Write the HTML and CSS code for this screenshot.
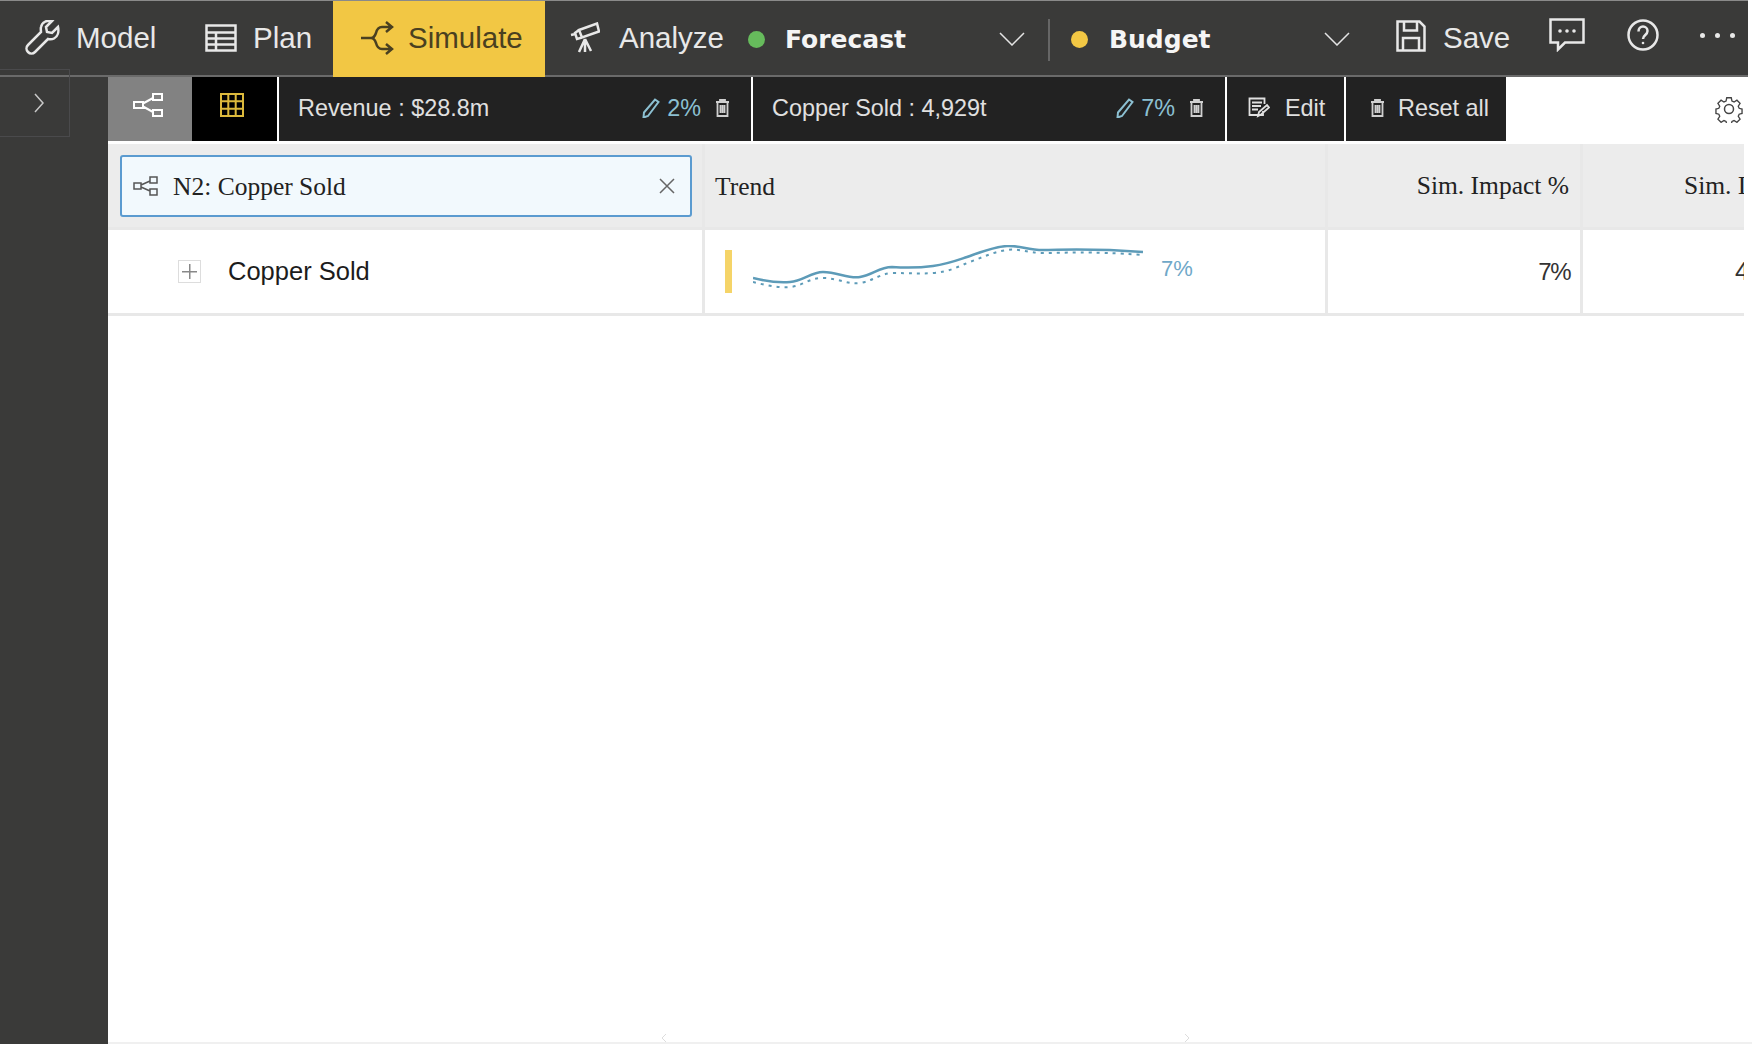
FILE: index.html
```html
<!DOCTYPE html>
<html lang="en">
<head>
    <meta charset="UTF-8">
    <meta name="viewport" content="width=device-width, initial-scale=1.0">
    <title>Simulate</title>
    <link rel="stylesheet" href="styles.css">
</head>
<body>

<header class="topbar">
    <div class="nav-item nav-model">
        <svg class="nav-icon" width="36" height="36" viewBox="0 0 36 36"><path d="M33 7l-6 6-5-1-1-5 6-6c-5-1-10 1-11 6-.5 2 0 4 0 5L3 25c-2 2-2 5 0 7s5 2 7 0l13-13c2 .5 4 .5 6-.5 4-2 5-7 4-11.500z"/></svg>
        <span>Model</span>
    </div>
    <div class="nav-item nav-plan">
        <svg class="nav-icon" width="32" height="28" viewBox="0 0 32 28"><path d="M1.500 1.500h29v25h-29zM1.500 8.500h29M1.500 14.500h29M1.500 20.500h29M11 8.500v18"/></svg>
        <span>Plan</span>
    </div>
    <div class="nav-item nav-simulate">
        <svg class="nav-icon" width="34" height="34" viewBox="0 0 34 34"><path d="M0 17h10c3 0 4-2 5-5 1-4 3-6 6-6h10M25 1l6 5-6 5M10 17c3 0 4 2 5 5 1 4 3 6 6 6h10M25 23l6 5-6 5"/></svg>
        <span>Simulate</span>
    </div>
    <div class="nav-item nav-analyze">
        <svg class="nav-icon" width="30" height="32" viewBox="0 0 30 32"><path d="M9 8L27 1.500l2 8-17 6zM9 8l-4 3 2 6 5-1.500M1 13l4-1M15 17l-6 13M15 17l0 13M15 17l6 12"/></svg>
        <span>Analyze</span>
    </div>
    <div class="scenario scenario-forecast">
        <span class="dot dot-green"></span>
        <span class="scenario-name">Forecast</span>
        <svg class="chevron" width="26" height="14" viewBox="0 0 26 14"><path d="M1 1l12 12L25 1"/></svg>
    </div>
    <div class="scenario scenario-budget">
        <span class="dot dot-yellow"></span>
        <span class="scenario-name">Budget</span>
        <svg class="chevron" width="26" height="14" viewBox="0 0 26 14"><path d="M1 1l12 12L25 1"/></svg>
    </div>
    <div class="nav-item nav-save">
        <svg class="nav-icon" width="30" height="32" viewBox="0 0 30 32"><path d="M1.500 1.500h22l5 5v24h-27zM8 1.500v9h13v-9M7 30.500V18h16v12.500"/></svg>
        <span>Save</span>
    </div>
    <svg class="nav-icon icon-comment" width="36" height="34" viewBox="0 0 36 34"><path d="M1.500 1.500h33v23H16l-7 7v-7H1.500z"/><circle class="fill-white" cx="11" cy="13" r="1.800"/><circle class="fill-white" cx="18" cy="13" r="1.800"/><circle class="fill-white" cx="25" cy="13" r="1.800"/></svg>
    <svg class="nav-icon icon-help" width="32" height="32" viewBox="0 0 32 32"><circle cx="16" cy="16" r="14.500"/><path d="M11.500 12.500c0-3 2-5 4.500-5s4.500 2 4.500 4.500c0 4-4.500 4-4.500 8"/><circle class="fill-white" cx="16" cy="24" r="1.300"/></svg>
    <div class="more-dots"><i></i><i></i><i></i></div>
</header>

<div class="content">
    <aside class="sidebar">
        <div class="side-toggle">
            <svg class="side-chevron" width="10" height="20" viewBox="0 0 10 20"><path d="M1 1l8 9-8 9"/></svg>
        </div>
    </aside>

    <main class="main">
        <div class="toolbar">
            <div class="tab tab-tree">
                <svg class="tree-icon" width="30" height="24" viewBox="0 0 30 24"><path d="M1 9h9v6H1zM20 1h9v6h-9zM20 17h9v6h-9zM10 10.500L20 5M10 13.500L20 19"/></svg>
            </div>
            <div class="tab tab-grid">
                <svg class="grid-icon" width="24" height="24" viewBox="0 0 24 24"><path d="M1 1h22v22H1zM8.300 1v22M15.700 1v22M1 8.300h22M1 15.700h22"/></svg>
            </div>
            <div class="chip">
                <span class="chip-label">Revenue : $28.8m</span>
                <svg class="pencil" width="18" height="20" viewBox="0 0 18 20"><path d="M13 1.500l3.500 2.500L6 18l-4.500 1.500L2 14.500z"/></svg>
                <span class="chip-value">2%</span>
                <svg class="trash" width="15" height="18" viewBox="0 0 15 18"><path d="M5 2.500V1h5v1.500M1 3h13M2.500 3h10v14h-10zM5.500 6v8M7.500 6v8M9.500 6v8"/></svg>
            </div>
            <div class="chip">
                <span class="chip-label">Copper Sold : 4,929t</span>
                <svg class="pencil" width="18" height="20" viewBox="0 0 18 20"><path d="M13 1.500l3.500 2.500L6 18l-4.500 1.500L2 14.500z"/></svg>
                <span class="chip-value">7%</span>
                <svg class="trash" width="15" height="18" viewBox="0 0 15 18"><path d="M5 2.500V1h5v1.500M1 3h13M2.500 3h10v14h-10zM5.500 6v8M7.500 6v8M9.500 6v8"/></svg>
            </div>
            <div class="action action-edit">
                <svg class="edit-icon" width="22" height="22" viewBox="0 0 22 22"><path d="M15 14v4H1.500V1.500h15V7M4 5.500h10M4 9h9M4 12.500h6M10 19l1-4 8-7 2 2.500-8 7z"/></svg>
                <span>Edit</span>
            </div>
            <div class="action action-reset">
                <svg class="trash trash-reset" width="15" height="18" viewBox="0 0 15 18"><path d="M5 2.500V1h5v1.500M1 3h13M2.500 3h10v14h-10zM5.500 6v8M7.500 6v8M9.500 6v8"/></svg>
                <span>Reset all</span>
            </div>
            <svg class="gear" width="28" height="28" viewBox="0 0 28 28"><circle cx="14" cy="14" r="4.500"/><path d="M11.500 1.500h5l.8 3.700 2.300 1 3.200-2 3.500 3.500-2 3.200 1 2.300 3.200.8v5l-3.200.8-1 2.300 2 3.200-3.500 3.500-3.200-2-2.300 1-.8 3.200h-5l-.8-3.200-2.300-1-3.200 2-3.500-3.500 2-3.200-1-2.300-3.200-.8v-5l3.200-.8 1-2.300-2-3.200 3.500-3.500 3.200 2 2.300-1z" transform="translate(1.400 1.400) scale(.9)"/></svg>
        </div>

        <div class="grid-table">
            <div class="cell head head-name">
                <div class="search-box">
                    <svg class="tree-small" width="26" height="20" viewBox="0 0 26 20"><path d="M1 7h7v6H1zM17 1h7v6h-7zM17 13h7v6h-7zM8 9l9-4M8 11l9 4"/></svg>
                    <span class="search-text">N2: Copper Sold</span>
                    <svg class="search-close" width="16" height="16" viewBox="0 0 16 16"><path d="M1 1l14 14M15 1L1 15"/></svg>
                </div>
            </div>
            <div class="cell head head-trend">Trend</div>
            <div class="cell head head-right">Sim. Impact %</div>
            <div class="cell head head-clip">Sim. Impact</div>

            <div class="cell row-name">
                <span class="expand"></span>
                <span>Copper Sold</span>
            </div>
            <div class="cell row-trend">
                <span class="trend-bar"></span>
                <svg class="spark" width="396" height="50" viewBox="0 0 396 50">
                    <path class="spark-dash" d="M0 37C12 40 25 43 37 42C50 41 58 32 70 33C85 33 95 40 107 38C120 36 126 29 139 28C155 28 165 29 180 28C195 27 205 22 214 18C228 13 240 7 254 5C265 3 275 8 290 8C310 8 335 6 390 10"/>
                    <path class="spark-line" d="M0 33C12 36 25 38 37 37C50 36 58 27 70 27C85 27 95 34 107 32C120 30 126 22 139 22C155 23 165 23 180 21C195 19 205 15 214 12C228 7 240 2 254 1C265 0 275 5 290 5C310 5 335 3 390 7"/>
                </svg>
                <span class="trend-value">7%</span>
            </div>
            <div class="cell row-right">7%</div>
            <div class="cell row-clip">4,929t</div>
        </div>

        <div class="scroll-hint">
            <svg width="6" height="8" viewBox="0 0 6 8"><path d="M5 0L1 4l4 4"/></svg>
            <svg width="6" height="8" viewBox="0 0 6 8"><path d="M1 0l4 4-4 4"/></svg>
        </div>
    </main>
</div>

</body>
</html>
```

FILE: styles.css
```css
body {
    margin: 0;
    width: 1752px;
    height: 1044px;
    overflow: hidden;
    background-color: #fff;
    font-family: "Liberation Sans", Arial, sans-serif;
    display: flex;
    flex-direction: column;
}
svg {
    display: block;
    flex: none;
    fill: none;
}

/* top bar */
.topbar {
    height: 74px;
    margin-right: 4px;
    flex: none;
    display: flex;
    align-items: center;
    background-color: #3a3a39;
    border-top: 1px solid #8a8a8a;
    border-bottom: 2px solid #6a6a6a;
    color: #e8e8e8;
    font-size: 29.5px;
}
.nav-item {
    display: flex;
    align-items: center;
    height: 100%;
}
.nav-icon {
    stroke: #e8e8e8;
    stroke-width: 2.500;
}
.fill-white {
    fill: #e8e8e8;
    stroke: none;
}
.nav-model {
    padding-left: 25px;
    gap: 15px;
    width: 205px;
    box-sizing: border-box;
}
.nav-plan {
    gap: 16px;
    width: 128px;
}
.nav-simulate {
    width: 212px;
    box-sizing: border-box;
    padding-left: 28px;
    gap: 13px;
    background-color: #f2c744;
    color: #4a4020;
    box-shadow: 0 2px 0 #f2c744;
}
.nav-simulate .nav-icon {
    stroke: #4a4020;
}
.nav-analyze {
    margin-left: 25px;
    gap: 19px;
    width: 178px;
}
.scenario {
    display: flex;
    align-items: center;
    height: 100%;
    font-family: "DejaVu Sans", sans-serif;
    font-weight: bold;
    font-size: 25px;
    color: #f5f5f5;
}
.scenario-forecast {
    width: 302px;
    box-sizing: border-box;
    position: relative;
}
.scenario-forecast::after {
    content: "";
    position: absolute;
    left: 300px;
    top: 18px;
    width: 2px;
    height: 42px;
    background-color: #666;
}
.scenario-budget {
    margin-left: 21px;
    width: 325px;
}
.dot {
    width: 17px;
    height: 17px;
    border-radius: 50%;
    flex: none;
    margin-top: 3px;
}
.dot-green {
    background-color: #66bb5c;
}
.dot-yellow {
    background-color: #f2c744;
}
.scenario-name {
    margin-left: 20px;
    flex: 1;
    padding-top: 3px;
}
.chevron {
    stroke: #e4e4e4;
    stroke-width: 1.500;
    margin-top: 1px;
}
.scenario-forecast .chevron {
    margin-right: 25px;
}
.scenario-budget .chevron {
    margin-left: 4px;
}
.scenario-budget .scenario-name {
    margin-left: 21px;
    flex: 0 0 211px;
}
.nav-save {
    gap: 17px;
}
.nav-save .nav-icon {
    margin-top: -4px;
}
.icon-comment {
    margin-left: 39px;
    margin-top: -7px;
}
.icon-help {
    margin-left: 42px;
    margin-top: -7px;
}
.more-dots {
    margin-left: 41px;
    margin-top: -5px;
    display: flex;
    gap: 10px;
}
.more-dots i {
    width: 5px;
    height: 5px;
    border-radius: 50%;
    background-color: #e8e8e8;
}

/* page below the bar */
.content {
    flex: 1;
    display: flex;
    min-height: 0;
}
.sidebar {
    width: 108px;
    flex: none;
    background-color: #3a3a39;
}
.side-toggle {
    width: 69px;
    height: 66px;
    margin-top: -8px;
    display: flex;
    align-items: center;
    justify-content: center;
    border: 1px solid #4a4a4c;
    border-left: none;
    position: relative;
}
.side-chevron {
    stroke: #c8c8c8;
    stroke-width: 1.500;
    margin-left: 9px;
}
.main {
    flex: 1;
    min-width: 0;
    display: flex;
    flex-direction: column;
    padding-right: 8px;
}

/* toolbar with chips */
.toolbar {
    height: 64px;
    flex: none;
    display: flex;
    color: #e0e0e0;
    font-size: 23.4px;
}
.tab {
    display: flex;
    align-items: center;
    justify-content: center;
    padding-bottom: 9px;
    box-sizing: border-box;
}
.tab-tree {
    width: 84px;
    padding-right: 4px;
    background-color: #828282;
}
.tab-grid {
    width: 85px;
    padding-right: 5px;
    background-color: #000;
}
.tree-icon {
    stroke: #fff;
    stroke-width: 2;
}
.grid-icon {
    stroke: #dcb93c;
    stroke-width: 2;
}
.chip {
    width: 472px;
    box-sizing: border-box;
    display: flex;
    align-items: center;
    margin-left: 2px;
    padding: 0 21px 2px 19px;
    background-color: #222;
}
.chip-label {
    flex: 1;
}
.pencil {
    stroke: #8cc0d2;
    stroke-width: 2;
    margin-right: 7px;
}
.chip-value {
    color: #8cc0d2;
    margin-right: 14px;
}
.trash {
    stroke: #d0d0d0;
    stroke-width: 1.800;
}
.action {
    display: flex;
    align-items: center;
    margin-left: 2px;
    padding-bottom: 2px;
    background-color: #222;
    box-sizing: border-box;
}
.action-edit {
    width: 117px;
    padding-left: 21px;
    gap: 15px;
}
.edit-icon {
    stroke: #e0e0e0;
    stroke-width: 1.800;
}
.action-reset {
    width: 160px;
    padding-left: 24px;
    gap: 13px;
}
.gear {
    margin-left: auto;
    margin-right: 1px;
    align-self: center;
    stroke: #444;
    stroke-width: 1.500;
}

/* table */
.grid-table {
    margin-top: 3px;
    display: grid;
    grid-template-columns: 597px 623px 255px 161px;
    grid-template-rows: 86px 86px;
    color: #222;
}
.cell {
    box-sizing: border-box;
    display: flex;
    align-items: center;
    white-space: nowrap;
    overflow: hidden;
    border-right: 3px solid #e8e8e8;
    border-bottom: 3px solid #e8e8e8;
}
.cell:nth-child(4n) {
    border-right: none;
}
.head {
    background-color: #ececec;
    font-family: "Liberation Serif", "Times New Roman", serif;
    font-size: 25.5px;
}
.head-name {
    padding: 0 10px 0 12px;
}
.search-box {
    width: 100%;
    height: 62px;
    box-sizing: border-box;
    display: flex;
    align-items: center;
    padding: 0 15px 0 11px;
    background-color: #f2f9fd;
    border: 2.500px solid #5b9bd0;
    border-radius: 3px;
}
.tree-small {
    stroke: #555;
    stroke-width: 1.500;
}
.search-text {
    flex: 1;
    margin-left: 14px;
    padding-top: 2px;
}
.search-close {
    stroke: #666;
    stroke-width: 1.500;
}
.head-trend {
    padding: 3px 0 0 10px;
}
.head-right {
    justify-content: flex-end;
    padding: 1px 11px 0 0;
}
.head-clip {
    padding: 1px 0 0 101px;
}
.row-name {
    padding-left: 70px;
    font-size: 25.5px;
    color: #1c1c1c;
}
.expand {
    width: 23px;
    height: 23px;
    flex: none;
    margin-right: 27px;
    box-sizing: border-box;
    border: 1px solid #ddd;
    background:
        linear-gradient(#888, #888) center / 15px 1.500px no-repeat,
        linear-gradient(#888, #888) center / 1.500px 15px no-repeat;
}
.row-trend {
    padding-left: 20px;
    position: relative;
}
.trend-bar {
    width: 7px;
    height: 43px;
    flex: none;
    background-color: #f5d468;
}
.spark {
    margin-left: 21px;
    margin-top: -4px;
}
.spark-line {
    stroke: #5d9bb8;
    stroke-width: 2.500;
}
.spark-dash {
    stroke: #5d9bb8;
    stroke-width: 2;
    stroke-dasharray: 3 5;
}
.trend-value {
    margin-left: 12px;
    margin-bottom: 5px;
    font-size: 22px;
    color: #6fa8c8;
}
.row-right {
    justify-content: flex-end;
    padding-right: 10px;
    font-size: 24px;
    letter-spacing: -1.500px;
    color: #333;
}
.row-clip {
    padding-left: 152px;
    font-size: 25.5px;
    color: #333;
}

/* leftovers of the horizontal scrollbar */
.scroll-hint {
    margin-top: auto;
    height: 8px;
    margin-right: -8px;
    display: flex;
    gap: 517px;
    padding-left: 553px;
    border-bottom: 2px solid #f0f0f0;
}
.scroll-hint svg {
    stroke: #ddd;
    stroke-width: 1;
}
```
